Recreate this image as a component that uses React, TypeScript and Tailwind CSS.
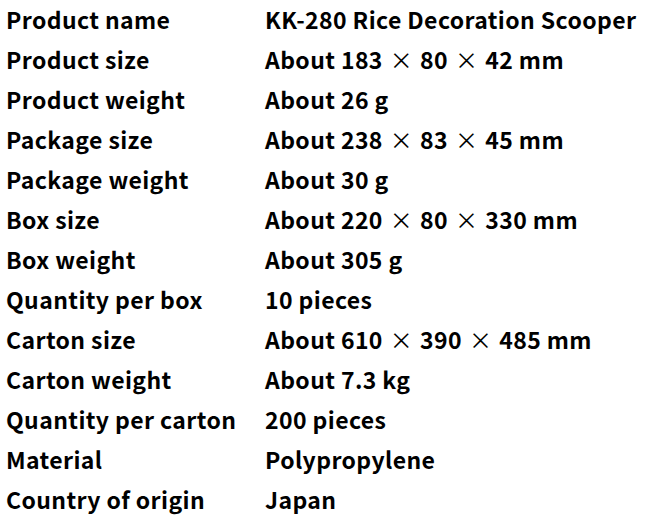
const rows: [string, string][] = [
  ["Product name", "KK-280 Rice Decoration Scooper"],
  ["Product size", "About 183 × 80 × 42 mm"],
  ["Product weight", "About 26 g"],
  ["Package size", "About 238 × 83 × 45 mm"],
  ["Package weight", "About 30 g"],
  ["Box size", "About 220 × 80 × 330 mm"],
  ["Box weight", "About 305 g"],
  ["Quantity per box", "10 pieces"],
  ["Carton size", "About 610 × 390 × 485 mm"],
  ["Carton weight", "About 7.3 kg"],
  ["Quantity per carton", "200 pieces"],
  ["Material", "Polypropylene"],
  ["Country of origin", "Japan"],
];

function Value({ text }: { text: string }) {
  const parts = text.split(" × ");
  return (
    <>
      {parts.map((p, i) => (
        <span key={i}>
          {i > 0 && (
            <>
              {" "}
              <span className="inline-block w-[26px] text-center font-normal">×</span>{" "}
            </>
          )}
          {p}
        </span>
      ))}
    </>
  );
}

export default function App() {
  return (
    <div
      className="w-[648px] h-[521px] bg-white text-black font-bold text-[23px] tracking-[0.4px] overflow-hidden"
      style={{ fontFamily: '"Noto Sans CJK JP", "Noto Sans", sans-serif' }}
    >
      {rows.map(([label, value]) => (
        <div key={label} className="flex h-10 items-center pb-[2px]">
          <div className="w-[265px] pl-[6px] shrink-0 whitespace-nowrap">{label}</div>
          <div className="whitespace-pre">
            <Value text={value} />
          </div>
        </div>
      ))}
    </div>
  );
}
